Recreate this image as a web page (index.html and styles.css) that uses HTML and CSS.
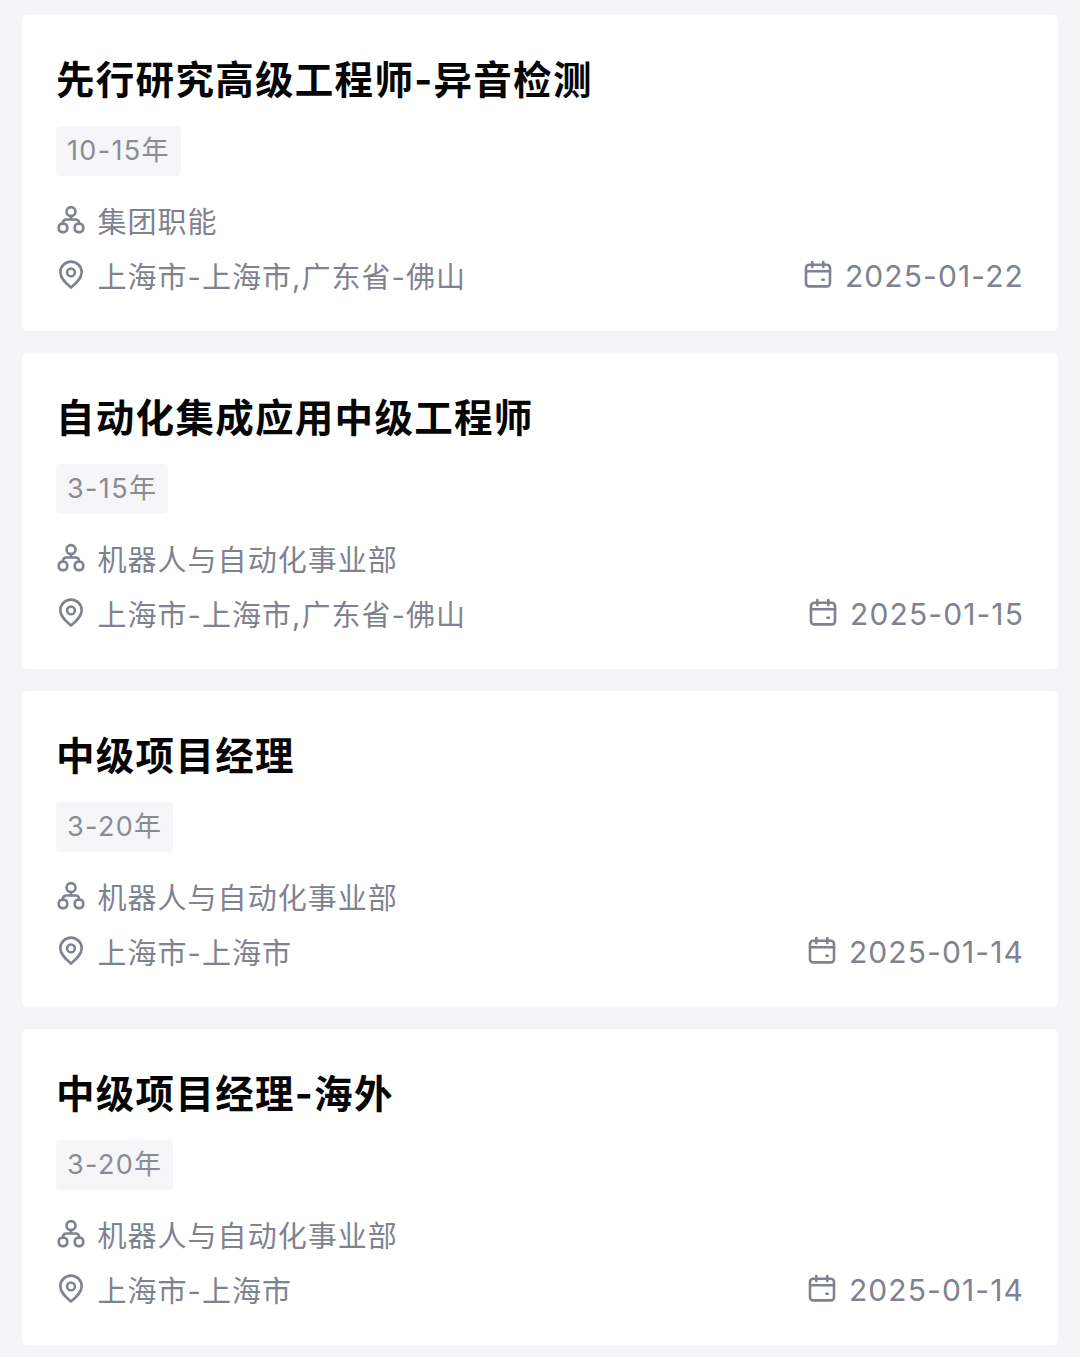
FILE: index.html
```html
<!DOCTYPE html>
<html lang="zh-CN">
<head>
<meta charset="utf-8">
<title>职位列表</title>
<link rel="stylesheet" href="styles.css">
</head>
<body>
<svg class="sprite" aria-hidden="true">
  <symbol id="org" viewBox="0 0 28 30">
    <circle cx="14" cy="6.6" r="4.500"/>
    <path d="M14 11v3.500M5.900 19v-1.100a3.400 3.400 0 0 1 3.400-3.400h9.400a3.400 3.400 0 0 1 3.400 3.400v1.100"/>
    <rect x="1.800" y="18.700" width="8.400" height="8.400" rx="3.300"/>
    <rect x="17.800" y="18.700" width="8.400" height="8.400" rx="3.300"/>
  </symbol>
  <symbol id="pin" viewBox="0 0 28 30">
    <path d="M14 27.600C9.500 23.700 3.300 18.800 3.300 12.300a10.700 10.700 0 0 1 21.400 0C24.700 18.800 18.500 23.700 14 27.600z"/>
    <circle cx="14" cy="12.400" r="3.900"/>
  </symbol>
  <symbol id="calendar" viewBox="0 0 28 30">
    <rect x="2" y="4.800" width="24" height="21.600" rx="3.200"/>
    <path d="M2 11.300h24M8.300 2.100v5M19.300 2.100v5M18.400 19.700h1.400"/>
  </symbol>
</svg>
<main class="jobs">
  <article class="job">
    <h2 class="title">先行研究高级工程师-异音检测</h2>
    <span class="tag">10-15年</span>
    <p class="row"><svg class="icon"><use href="#org"/></svg><span class="text">集团职能</span></p>
    <p class="row"><svg class="icon"><use href="#pin"/></svg><span class="text">上海市-上海市,广东省-佛山</span><svg class="icon date-icon"><use href="#calendar"/></svg><time class="date">2025-01-22</time></p>
  </article>
  <article class="job">
    <h2 class="title">自动化集成应用中级工程师</h2>
    <span class="tag">3-15年</span>
    <p class="row"><svg class="icon"><use href="#org"/></svg><span class="text">机器人与自动化事业部</span></p>
    <p class="row"><svg class="icon"><use href="#pin"/></svg><span class="text">上海市-上海市,广东省-佛山</span><svg class="icon date-icon"><use href="#calendar"/></svg><time class="date">2025-01-15</time></p>
  </article>
  <article class="job">
    <h2 class="title">中级项目经理</h2>
    <span class="tag">3-20年</span>
    <p class="row"><svg class="icon"><use href="#org"/></svg><span class="text">机器人与自动化事业部</span></p>
    <p class="row"><svg class="icon"><use href="#pin"/></svg><span class="text">上海市-上海市</span><svg class="icon date-icon"><use href="#calendar"/></svg><time class="date">2025-01-14</time></p>
  </article>
  <article class="job">
    <h2 class="title">中级项目经理-海外</h2>
    <span class="tag">3-20年</span>
    <p class="row"><svg class="icon"><use href="#org"/></svg><span class="text">机器人与自动化事业部</span></p>
    <p class="row"><svg class="icon"><use href="#pin"/></svg><span class="text">上海市-上海市</span><svg class="icon date-icon"><use href="#calendar"/></svg><time class="date">2025-01-14</time></p>
  </article>
</main>
</body>
</html>
```
FILE: styles.css
```css
* { box-sizing: border-box; }
body {
  margin: 0;
  background: #f5f5f8;
  color: #7f8290;
  font-family: Inter, "Noto Sans CJK SC", sans-serif;
}
.sprite { display: none; }
.jobs {
  display: flex;
  flex-direction: column;
  gap: 22px;
  padding: 15px 22px 12px;
}
.job {
  display: flex;
  flex-direction: column;
  align-items: flex-start;
  height: 316px;
  padding: 37px 34px 0;
  background: #fff;
  border-radius: 5px;
}
.title {
  margin: 0;
  height: 56px;
  line-height: 57px;
  font-size: 38.500px;
  font-weight: 700;
  letter-spacing: 1.300px;
  color: #050505;
}
.tag {
  height: 50px;
  margin: 18px 0 17px;
  padding: 0 11px;
  line-height: 49px;
  font-size: 27px;
  letter-spacing: 1.350px;
  color: #8b8b93;
  background: #f6f6f8;
  border-radius: 4px;
}
.row {
  display: flex;
  align-items: center;
  width: 100%;
  height: 55.500px;
  margin: 0;
  line-height: 56px;
}
.icon {
  flex: none;
  width: 28px;
  height: 30px;
  margin: 0 12.500px 2px 1px;
  fill: none;
  stroke: currentColor;
  stroke-width: 2.600;
  stroke-linecap: round;
  stroke-linejoin: round;
}
.text {
  padding-top: 4px;
  font-size: 29px;
  letter-spacing: 1.030px;
}
.date-icon {
  margin-left: auto;
  margin-right: 13px;
}
.date {
  font-size: 30px;
  letter-spacing: 1.100px;
}
```
